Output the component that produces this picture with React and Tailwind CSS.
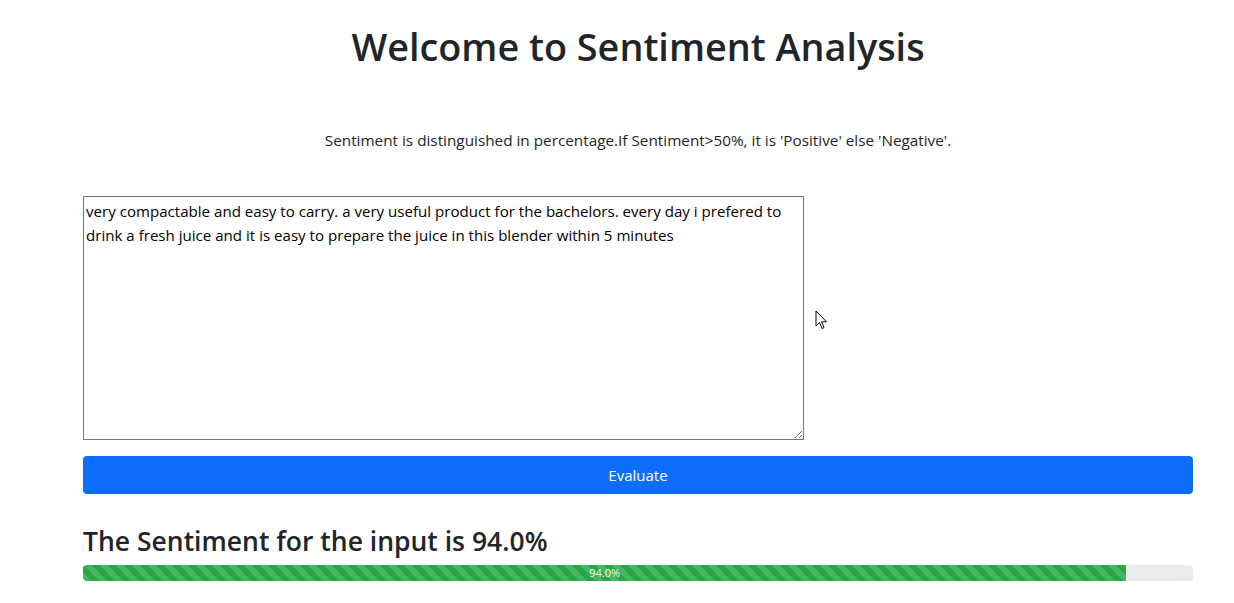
import React from "react";

export default function App() {
  const pct = 94.0;
  return (
    <div className="relative min-h-[603px] bg-white text-[#212529]" style={{ fontFamily: '"Open Sans", "Noto Sans", sans-serif' }}>
      <div className="w-[1110px] ml-[83px]">
        <h1 className="pt-[24px] text-center text-[37.8px] font-semibold leading-[1.2]">
          Welcome to Sentiment Analysis
        </h1>
        <p className="mt-[59px] text-center text-[15.3px] leading-6">
          Sentiment is distinguished in percentage.If Sentiment&gt;50%, it is 'Positive' else 'Negative'.
        </p>
        <div className="mt-[44px] flex">
          <textarea
            className="h-[244px] w-[721px] resize border border-[#767676] px-[2px] py-[2px] text-[15.1px] leading-[24px] text-black outline-none"
            defaultValue="very compactable and easy to carry. a very useful product for the bachelors. every day i prefered to drink a fresh juice and it is easy to prepare the juice in this blender within 5 minutes"
          />
        </div>
        <button className="mt-[16px] flex h-[38px] w-full items-center justify-center rounded-[4px] bg-[#0d6efd] text-[15px] text-white">
          Evaluate
        </button>
        <h3 className="mt-[32px] text-[26.5px] font-semibold leading-[1.2]">
          The Sentiment for the input is {pct.toFixed(1)}%
        </h3>
        <div className="mt-[7px] flex h-[16px] w-full overflow-hidden rounded-[4px] bg-[#e9ecef]">
          <div
            className="flex items-center justify-center text-[11px] text-white"
            style={{
              width: `${pct}%`,
              backgroundColor: "#28a745",
              backgroundImage:
                "linear-gradient(45deg, rgba(255,255,255,.15) 25%, transparent 25%, transparent 50%, rgba(255,255,255,.15) 50%, rgba(255,255,255,.15) 75%, transparent 75%, transparent)",
              backgroundSize: "16px 16px",
            }}
          >
            {pct.toFixed(1)}%
          </div>
        </div>
      </div>
      <svg className="absolute left-[815px] top-[310px]" width="13" height="21" viewBox="0 0 13 21">
        <path d="M1 1 L1 16 L4.5 12.5 L7 18.5 L9 17.6 L6.6 11.8 L11.5 11.8 Z" fill="white" stroke="black" strokeWidth="1" strokeLinejoin="round" />
      </svg>
    </div>
  );
}
